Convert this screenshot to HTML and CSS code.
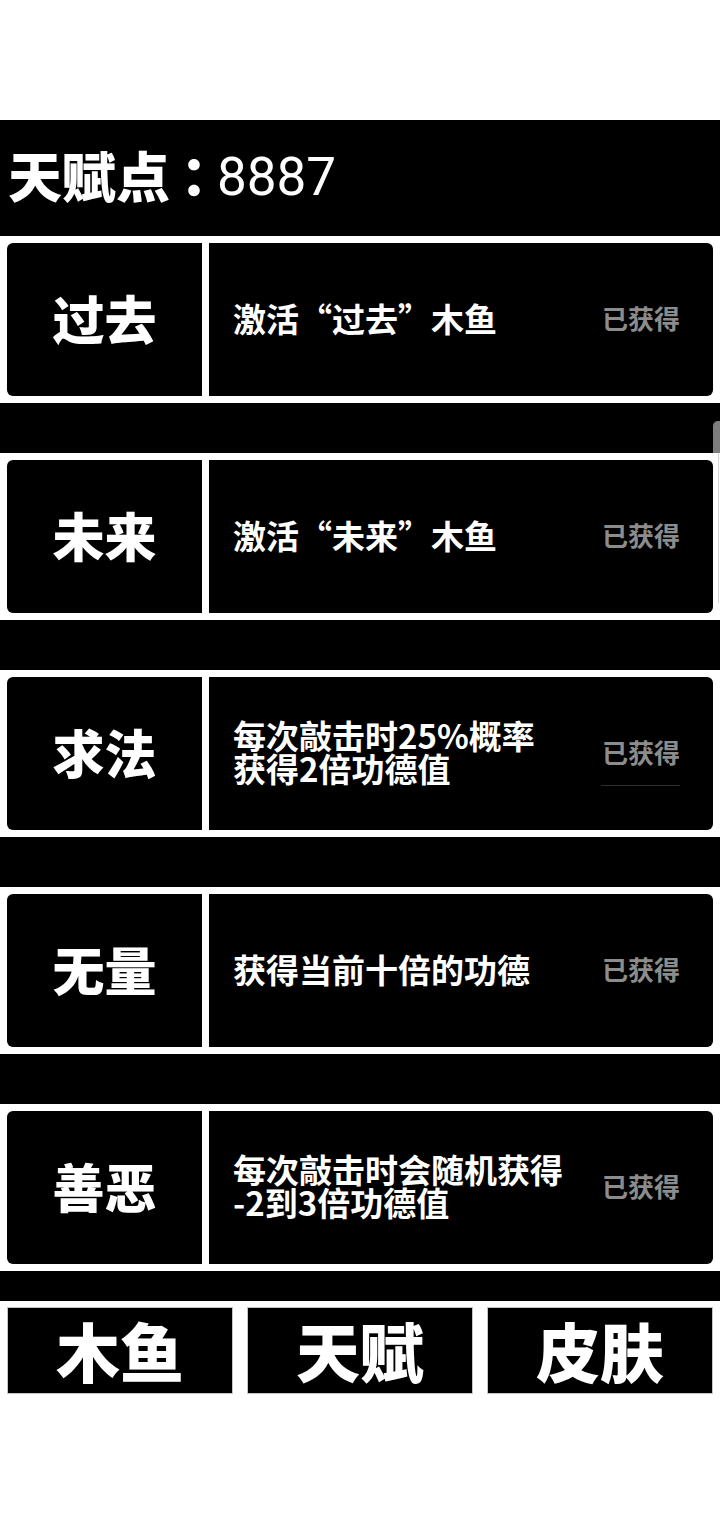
FILE: index.html
```html
<!DOCTYPE html>
<html lang="zh-CN">
<head>
<meta charset="utf-8">
<title>天赋</title>
<link rel="stylesheet" href="styles.css">
</head>
<body>
<div class="top-space"></div>
<header class="points">
  <span class="points-label">天赋点<span class="colon">：</span></span><span class="points-value">8887</span>
</header>
<main class="talents">
  <section class="talent">
    <div class="talent-name">过去</div>
    <div class="talent-body"><p class="talent-desc">激活“过去”木鱼</p><span class="talent-status">已获得</span></div>
  </section>
  <div class="divider"></div>
  <section class="talent">
    <div class="talent-name">未来</div>
    <div class="talent-body"><p class="talent-desc">激活“未来”木鱼</p><span class="talent-status">已获得</span></div>
  </section>
  <div class="divider"></div>
  <section class="talent">
    <div class="talent-name">求法</div>
    <div class="talent-body"><p class="talent-desc">每次敲击时25%概率<br>获得2倍功德值</p><span class="talent-status talent-status-lined">已获得</span></div>
  </section>
  <div class="divider"></div>
  <section class="talent">
    <div class="talent-name">无量</div>
    <div class="talent-body"><p class="talent-desc">获得当前十倍的功德</p><span class="talent-status">已获得</span></div>
  </section>
  <div class="divider"></div>
  <section class="talent">
    <div class="talent-name">善恶</div>
    <div class="talent-body"><p class="talent-desc">每次敲击时会随机获得<br>-2到3倍功德值</p><span class="talent-status">已获得</span></div>
  </section>
  <div class="divider divider-last"></div>
</main>
<nav class="tabs">
  <button class="tab">木鱼</button>
  <button class="tab">天赋</button>
  <button class="tab">皮肤</button>
</nav>
<div class="edge-handle"></div>
</body>
</html>
```

FILE: styles.css
```css
html, body {
  margin: 0;
  padding: 0;
  background: #ffffff;
}

body {
  position: relative;
  width: 720px;
  min-height: 1520px;
  font-family: "Noto Sans CJK SC", "Noto Sans", sans-serif;
  color: #ffffff;
}

.top-space {
  height: 120px;
}

.points {
  height: 116px;
  background: #000000;
  display: flex;
  align-items: center;
  padding-left: 8px;
  padding-bottom: 6px;
  box-sizing: border-box;
}

.points-label {
  font-size: 54px;
  font-weight: 900;
  line-height: 1;
}

.colon {
  display: inline-block;
  font-family: "Noto Sans CJK TC", "Noto Sans CJK SC", sans-serif;
  margin-left: -3px;
  margin-right: -4px;
}

.points-value {
  font-family: Roboto, "Liberation Sans", sans-serif;
  font-size: 53px;
  font-weight: 400;
  line-height: 1;
  padding-top: 4px;
}

.talents {
  display: flex;
  flex-direction: column;
}

.talent {
  display: flex;
  gap: 7px;
  padding: 7px;
  height: 167px;
  box-sizing: border-box;
  background: #ffffff;
}

.talent-name {
  width: 195px;
  flex: none;
  background: #000000;
  border-radius: 6px 0 0 6px;
  display: flex;
  align-items: center;
  justify-content: center;
  font-size: 52px;
  font-weight: 900;
  line-height: 1;
  padding-bottom: 4px;
  box-sizing: border-box;
}

.talent-body {
  flex: 1;
  background: #000000;
  border-radius: 0 6px 6px 0;
  display: flex;
  align-items: center;
  padding-left: 24px;
  padding-right: 33px;
  padding-bottom: 3px;
}

.talent-desc {
  margin: 0;
  font-size: 33px;
  font-weight: 700;
  line-height: 33px;
  white-space: nowrap;
}

.talent-status {
  margin-left: auto;
  font-size: 26px;
  font-weight: 700;
  color: #8c8c8c;
  line-height: 1;
}

.talent-status-lined {
  position: relative;
}

.talent-status-lined::after {
  content: "";
  position: absolute;
  left: -1px;
  right: 0;
  top: 46px;
  height: 1px;
  background: #2e2e2e;
}

.divider {
  height: 50px;
  background: #000000;
}

.divider-last {
  height: 30px;
}

.tabs {
  display: flex;
  gap: 14px;
  padding: 6px 7px;
}

.tab {
  flex: 1;
  height: 87px;
  margin: 0;
  padding: 0 0 4px;
  background: #000000;
  border: 1px solid #c4c4c4;
  color: #ffffff;
  font-family: "Noto Sans CJK SC", sans-serif;
  font-size: 64px;
  font-weight: 900;
  line-height: 1;
}

.edge-handle {
  position: absolute;
  top: 421px;
  right: 0;
  width: 7px;
  height: 32px;
  background: #7d7d7d;
  border-radius: 5px 0 0 0;
}

.edge-handle::after {
  content: "";
  position: absolute;
  top: 32px;
  right: 1px;
  width: 1px;
  height: 150px;
  background: #d6d6d6;
}
```
